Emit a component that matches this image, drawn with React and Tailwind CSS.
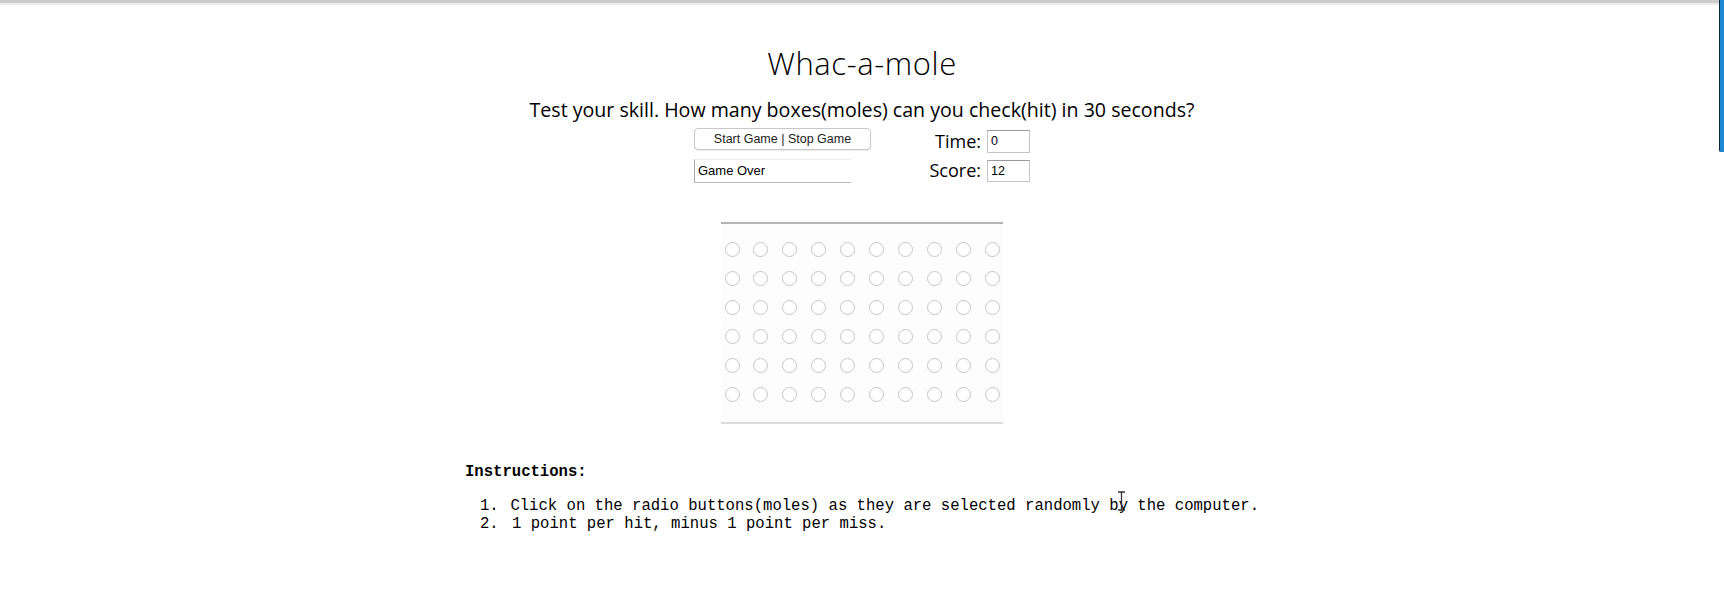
import React from "react";

const ROWS = 6;
const COLS = 10;

const Mole = () => (
  <span className="block w-[15px] h-[15px] rounded-full border border-[#c6c6c6] bg-white" />
);

const App = () => {
  return (
    <div className="relative min-h-[606px] bg-white text-black">
      <div className="h-[3px] bg-[#cdcdcd]" />
      <div className="h-[2px] bg-[#ececec]" />

      <div className="mx-auto w-[794px] flex flex-col items-center font-['Open_Sans',sans-serif]">
        <h1 className="mt-[39px] h-[38px] leading-[38px] text-[31px] font-light tracking-[0.6px]">
          Whac-a-mole
        </h1>
        <p className="mt-[17px] h-[22px] leading-[22px] text-[19.6px]">
          Test your skill. How many boxes(moles) can you check(hit) in 30 seconds?
        </p>

        <div className="mt-[7px] grid grid-cols-[177px_159px] gap-y-[2px] w-[336px]">
          <button className="h-[22px] w-[177px] rounded-[4px] border border-[#c8c8c8] bg-white shadow-[0_1px_1px_rgba(0,0,0,0.08)] text-[12.5px] font-['Liberation_Sans',sans-serif] text-[#222]">
            Start Game | Stop Game
          </button>
          <div className="flex items-center justify-end">
            <span className="text-[18px] mr-[6px]">Time:</span>
            <span className="h-[23px] w-[43px] border border-[#c4c4c4] border-t-[#999] pl-[3px] text-[12.5px] leading-[21px] font-['Liberation_Sans',sans-serif]">
              0
            </span>
          </div>
          <span className="self-center h-[24px] w-[157px] border-l border-b border-t border-l-[#aaa] border-b-[#bbb] border-t-[#eee] pl-[3px] text-[13px] leading-[22px] font-['Liberation_Sans',sans-serif]">
            Game Over
          </span>
          <div className="flex items-center justify-end">
            <span className="text-[18px] mr-[6px]">Score:</span>
            <span className="h-[22px] w-[43px] border border-[#c4c4c4] border-t-[#999] pl-[3px] text-[12.5px] leading-[20px] font-['Liberation_Sans',sans-serif]">
              12
            </span>
          </div>
        </div>

        <div className="mt-[38px] w-[282px] border-t-2 border-b-2 border-t-[#b4b4b4] border-b-[#dcdcdc] bg-[#fdfdfd] px-[3.5px] pt-[18px] pb-[20px] flex flex-col gap-[14px]">
          {Array.from({ length: ROWS }).map((_, r) => (
            <div key={r} className="flex gap-[13.9px]">
              {Array.from({ length: COLS }).map((_, c) => (
                <Mole key={c} />
              ))}
            </div>
          ))}
        </div>
      </div>

      <div className="mx-auto w-[794px] font-['Liberation_Mono',monospace] text-[15.6px] leading-[18.5px] whitespace-nowrap">
        <h3 className="mt-[39px] font-bold">Instructions:</h3>
        <ol className="mt-[15px]">
          <li className="flex">
            <span className="w-[47px] pl-[15px]">1.</span>
            <span>Click on the radio buttons(moles) as they are selected randomly by the computer.</span>
          </li>
          <li className="flex">
            <span className="w-[47px] pl-[15px]">2.</span>
            <span>1 point per hit, minus 1 point per miss.</span>
          </li>
        </ol>
      </div>

      {/* text cursor */}
      <svg className="absolute left-[1117px] top-[491px]" width="9" height="20" viewBox="0 0 9 20">
        <path d="M1 1h3l0.5 1 0.5-1h3M4.5 2v16M1 19h3l0.5-1 0.5 1h3" stroke="#333" strokeWidth="1.3" fill="none" />
      </svg>

      {/* window edge */}
      <div className="absolute right-0 top-0 h-[152px] w-[5px] rounded-bl-[2px] border-l border-[#0b2540] bg-[#1e8ad6]" />
    </div>
  );
};

export default App;
